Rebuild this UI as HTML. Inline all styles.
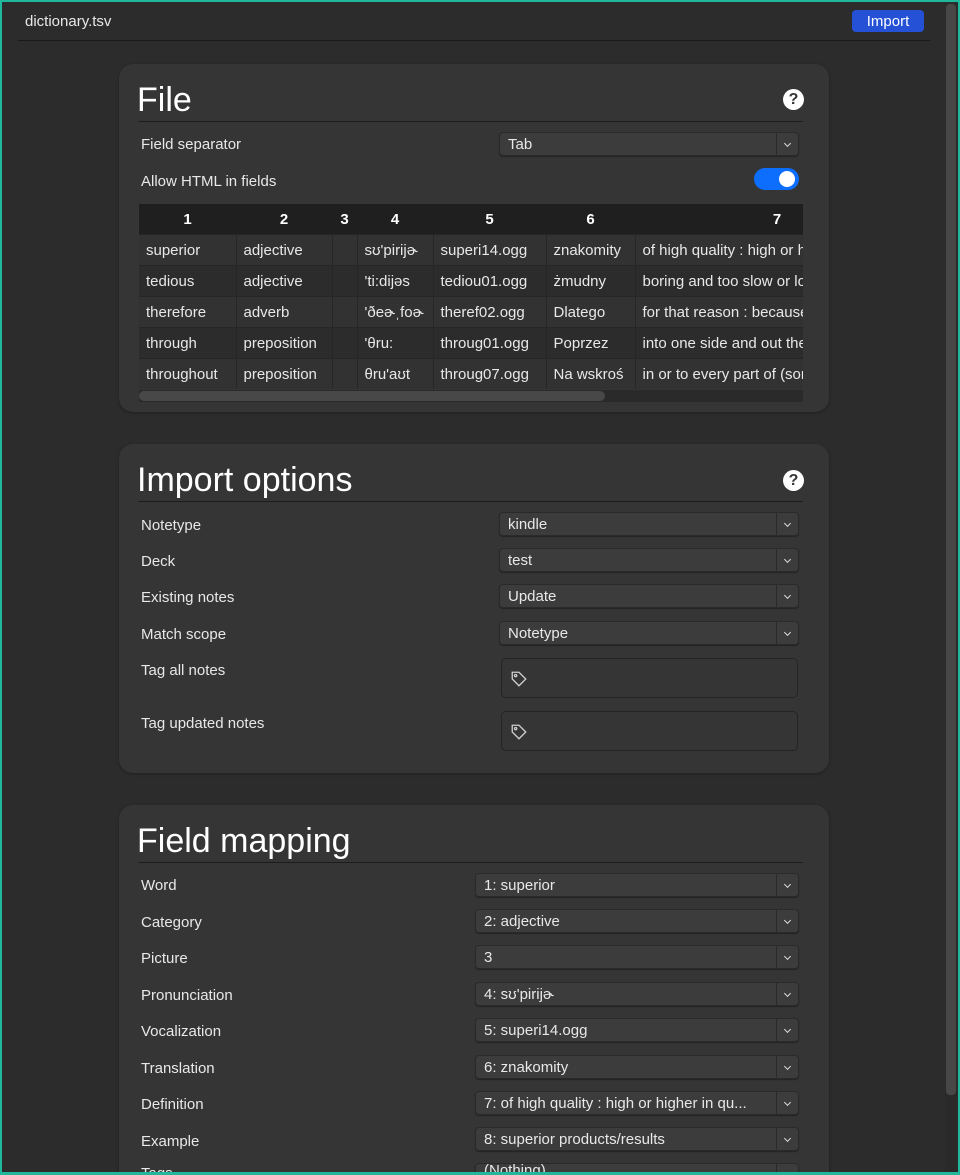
<!DOCTYPE html>
<html><head><meta charset="utf-8"><style>
*{box-sizing:border-box;margin:0;padding:0}
html{width:960px;height:1175px;overflow:hidden}
body{width:960px;height:1175px;overflow:hidden;background:#2c2c2c;font-family:"Liberation Sans","DejaVu Sans",sans-serif;color:#e8e8e8;position:relative}
.frame{position:absolute;left:0;top:0;width:960px;height:1175px;border:2px solid #1fb89a;border-bottom-width:3px;pointer-events:none;z-index:10}
.hdr{position:absolute;left:25px;top:13px;font-size:15px}
.hline{position:absolute;left:18px;top:40px;width:912px;height:1px;background:#1a1a1a}
.btn{position:absolute;left:852px;top:10px;width:72px;height:22px;background:#2551d6;border-radius:4px;color:#fff;font-size:15px;text-align:center;line-height:23px}
.sb{position:absolute;left:945px;top:4px;width:12px;height:1168px;background:#2a2a2a}
.sb div{position:absolute;left:1px;top:0;width:10px;height:1091px;background:#474747;border-radius:4px}
.card{position:absolute;left:119px;width:710px;background:#353535;border-radius:14px;box-shadow:0 1px 3px rgba(0,0,0,.3);overflow:hidden}
.title{position:absolute;left:18px;font-size:34px;color:#fff}
.line{position:absolute;left:19px;width:665px;height:1px;background:#1c1c1c}
.lbl{position:absolute;left:22px;font-size:15px;margin-top:2px}
.sel{position:absolute;height:24px;background:#3c3c3c;border:1px solid #2a2a2a;border-radius:4px;font-size:15px;padding-left:8px;line-height:24px;box-shadow:0 1px 1px rgba(0,0,0,.35)}
.sel:after{content:"";position:absolute;right:0;top:0;width:21px;height:22px;border-left:1px solid #2a2a2a}
.sel i{position:absolute;right:8px;top:8px;width:5px;height:5px;border-right:1.5px solid #ddd;border-bottom:1.5px solid #ddd;transform:rotate(45deg)}
.help{position:absolute;left:664px;width:21px;height:21px;border-radius:50%;background:#fff;color:#353535;font-weight:bold;font-size:16px;text-align:center;line-height:21px}
.tag{position:absolute;left:382px;width:297px;height:40px;background:#353535;border:1px solid #242424;border-radius:5px}
table{position:absolute;left:20px;top:140px;border-collapse:collapse;font-size:15px;table-layout:fixed}
th{background:#1f1f1f;height:30px;font-weight:bold;color:#fff;text-align:center;padding-top:2px}
td{height:31px;padding-left:7px;padding-top:2px;white-space:nowrap;overflow:hidden;border-right:1px solid #262626;border-top:1px solid #262626}
tr.a td{background:#2c2c2c}tr.b td{background:#323232}
</style></head><body>
<div class="frame"></div>
<div class="hdr">dictionary.tsv</div><div class="btn">Import</div><div class="hline"></div>
<div class="sb"><div></div></div>

<div class="card" style="top:64px;height:348px">
<div class="title" style="top:17px">File</div><div class="help" style="top:25px">?</div>
<div class="line" style="top:57px"></div>
<div class="lbl" style="top:70px">Field separator</div>
<div class="sel" style="left:380px;top:68px;width:300px">Tab<i></i></div>
<div class="lbl" style="top:107px">Allow HTML in fields</div>
<div style="position:absolute;left:635px;top:104px;width:45px;height:22px;border-radius:11px;background:#0d6efd"><div style="position:absolute;right:4px;top:3px;width:16px;height:16px;border-radius:50%;background:#fff"></div></div>
<div style="position:absolute;left:20px;top:140px;width:664px;height:198px;overflow:hidden">
<table style="left:0;top:0;width:780px">
<colgroup><col style="width:97px"><col style="width:96px"><col style="width:25px"><col style="width:76px"><col style="width:113px"><col style="width:89px"><col style="width:284px"></colgroup>
<tr><th>1</th><th>2</th><th>3</th><th>4</th><th>5</th><th>6</th><th>7</th></tr>
<tr class="b"><td>superior</td><td>adjective</td><td></td><td>sʊ'pirijɚ</td><td>superi14.ogg</td><td>znakomity</td><td>of high quality : high or higher in</td></tr>
<tr class="a"><td>tedious</td><td>adjective</td><td></td><td>'ti:dijəs</td><td>tediou01.ogg</td><td>żmudny</td><td>boring and too slow or long</td></tr>
<tr class="b"><td>therefore</td><td>adverb</td><td></td><td>'ðeɚˌfoɚ</td><td>theref02.ogg</td><td>Dlatego</td><td>for that reason : because of that</td></tr>
<tr class="a"><td>through</td><td>preposition</td><td></td><td>'θru:</td><td>throug01.ogg</td><td>Poprzez</td><td>into one side and out the other</td></tr>
<tr class="b"><td>throughout</td><td>preposition</td><td></td><td>θru'aʊt</td><td>throug07.ogg</td><td>Na wskroś</td><td>in or to every part of (something)</td></tr>
</table>
<div style="position:absolute;left:0;top:186px;width:664px;height:12px;background:#2a2a2a"><div style="width:466px;height:10px;margin-top:1px;background:#484848;border-radius:5px"></div></div>
</div>
</div>

<div class="card" style="top:444px;height:329px">
<div class="title" style="top:17px">Import options</div><div class="help" style="top:26px">?</div>
<div class="line" style="top:57px"></div>
<div class="lbl" style="top:71px">Notetype</div><div class="sel" style="left:380px;top:68px;width:300px">kindle<i></i></div>
<div class="lbl" style="top:107px">Deck</div><div class="sel" style="left:380px;top:104px;width:300px">test<i></i></div>
<div class="lbl" style="top:143px">Existing notes</div><div class="sel" style="left:380px;top:140px;width:300px">Update<i></i></div>
<div class="lbl" style="top:180px">Match scope</div><div class="sel" style="left:380px;top:177px;width:300px">Notetype<i></i></div>
<div class="lbl" style="top:216px">Tag all notes</div>
<div class="tag" style="top:214px"><svg width="18" height="18" viewBox="0 0 16 16" style="position:absolute;left:8px;top:11px" fill="none" stroke="#ccc" stroke-width="1.2"><path d="M2 2h6l6 6-6 6-6-6z"/><circle cx="5" cy="5" r="1"/></svg></div>
<div class="lbl" style="top:269px">Tag updated notes</div>
<div class="tag" style="top:267px"><svg width="18" height="18" viewBox="0 0 16 16" style="position:absolute;left:8px;top:11px" fill="none" stroke="#ccc" stroke-width="1.2"><path d="M2 2h6l6 6-6 6-6-6z"/><circle cx="5" cy="5" r="1"/></svg></div>
</div>

<div class="card" style="top:805px;height:370px;border-radius:14px 14px 0 0">
<div class="title" style="top:17px">Field mapping</div>
<div class="line" style="top:57px"></div>
<div class="lbl" style="top:70px">Word</div><div class="sel" style="left:356px;top:68px;width:324px">1: superior<i></i></div>
<div class="lbl" style="top:107px">Category</div><div class="sel" style="left:356px;top:104px;width:324px">2: adjective<i></i></div>
<div class="lbl" style="top:143px">Picture</div><div class="sel" style="left:356px;top:140px;width:324px">3<i></i></div>
<div class="lbl" style="top:180px">Pronunciation</div><div class="sel" style="left:356px;top:177px;width:324px">4: sʊ'pirijɚ<i></i></div>
<div class="lbl" style="top:216px">Vocalization</div><div class="sel" style="left:356px;top:213px;width:324px">5: superi14.ogg<i></i></div>
<div class="lbl" style="top:253px">Translation</div><div class="sel" style="left:356px;top:250px;width:324px">6: znakomity<i></i></div>
<div class="lbl" style="top:289px">Definition</div><div class="sel" style="left:356px;top:286px;width:324px">7: of high quality : high or higher in qu...<i></i></div>
<div class="lbl" style="top:326px">Example</div><div class="sel" style="left:356px;top:322px;width:324px">8: superior products/results<i></i></div>
<div class="lbl" style="top:358px;font-size:15px">Tags</div><div class="sel" style="left:356px;top:358px;width:324px;height:12px;overflow:hidden;line-height:14px">(Nothing)</div>
</div>
</body></html>
